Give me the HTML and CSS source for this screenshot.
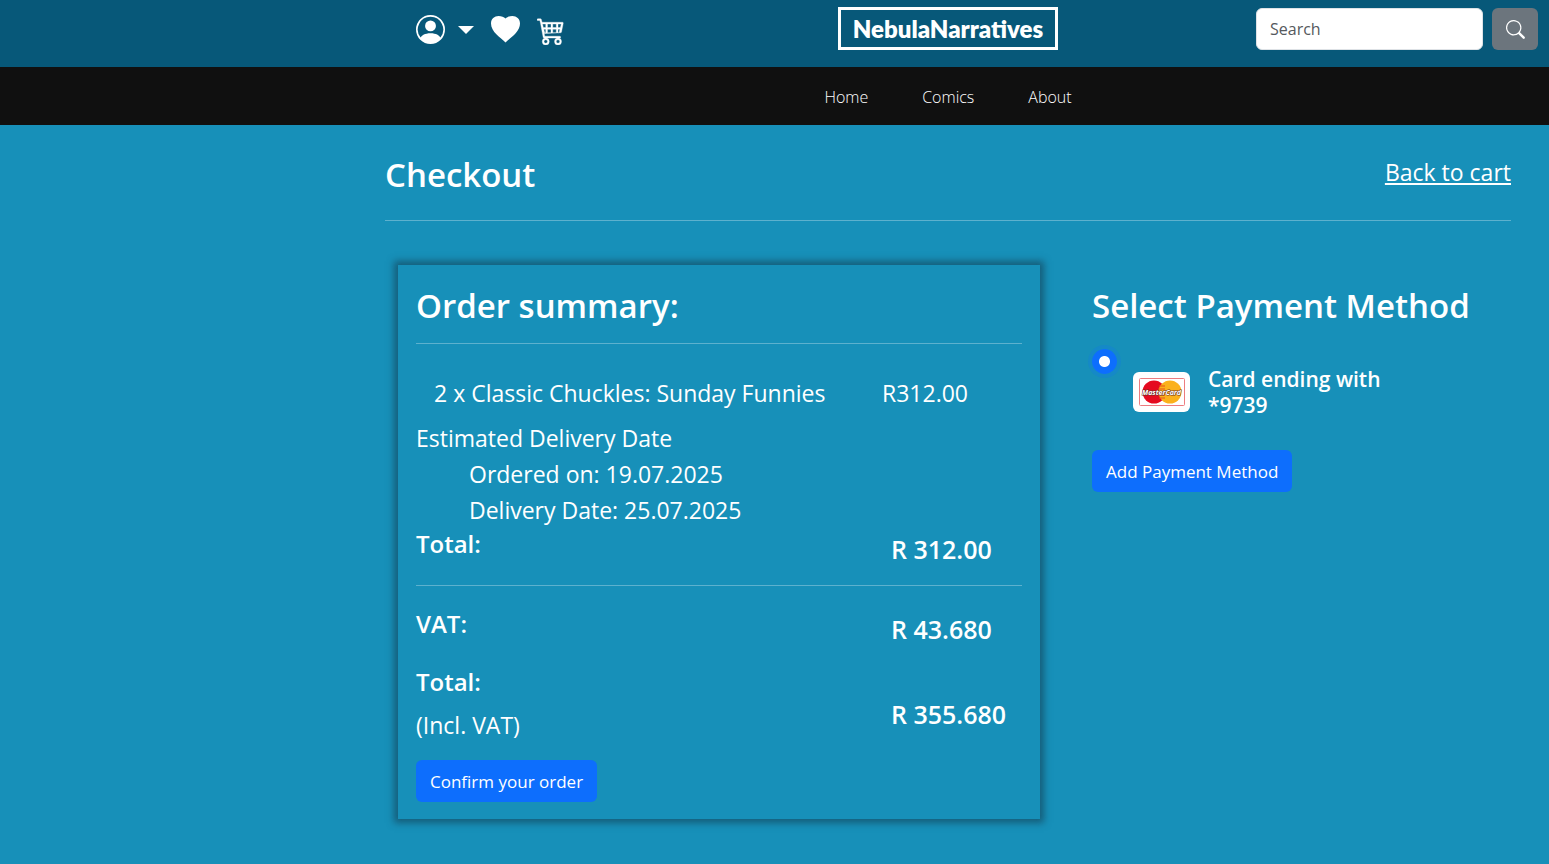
FILE: index.html
```html
<!DOCTYPE html>
<html lang="en">
<head>
<meta charset="utf-8">
<meta name="viewport" content="width=device-width, initial-scale=1">
<title>NebulaNarratives - Checkout</title>
<link rel="stylesheet" href="styles.css">
</head>
<body>
<header class="topbar">
  <div class="account">
    <button class="icon-button profile" type="button" aria-label="Account">
      <svg width="29" height="29" viewBox="0 0 16 16" fill="currentColor"><path d="M11 6a3 3 0 1 1-6 0 3 3 0 0 1 6 0"/><path fill-rule="evenodd" d="M0 8a8 8 0 1 1 16 0A8 8 0 0 1 0 8m8-7a7 7 0 0 0-5.468 11.37C3.242 11.226 4.805 10 8 10s4.757 1.225 5.468 2.37A7 7 0 0 0 8 1"/></svg>
      <svg width="16" height="8" viewBox="0 0 16 8" fill="currentColor"><path d="M0 0h16L8 8z"/></svg>
    </button>
    <a class="icon-button" href="#" aria-label="Wishlist">
      <svg width="29" height="29" viewBox="0 0 29 29" fill="currentColor"><path d="M14.500 27.500C9.500 22.500 0 17 0 8.500C0 3.800 3.500 1 7.500 1c3 0 5.500 1 7 2.500C16 2 18.500 1 21.500 1c4 0 7.500 2.800 7.500 7.500c0 8.500-9.500 14-14.500 19z"/></svg>
    </a>
    <a class="icon-button cart" href="#" aria-label="Cart">
      <svg width="28" height="28" viewBox="0 0 16 16" fill="currentColor" stroke="currentColor" stroke-width=".2"><path d="M0 1.500A.5.5 0 0 1 .5 1H2a.5.5 0 0 1 .485.379L2.890 3H14.500a.5.5 0 0 1 .49.598l-1 5a.5.5 0 0 1-.465.401l-9.397.472L4.415 11H13a.5.5 0 0 1 0 1H4a.5.5 0 0 1-.491-.408L2.010 3.607 1.610 2H.5a.5.5 0 0 1-.5-.5M3.140 4l.5 2H5V4zM6 4v2h2V4zm3 0v2h2V4zm3 0v2h1.360l.5-2zm1.110 3H12v2h.610zM11 7H9v2h2zM8 7H6v2h2zM5 7H3.890l.5 2H5zm0 5a2 2 0 1 0 0 4 2 2 0 0 0 0-4m-1 2a1 1 0 1 1 2 0 1 1 0 0 1-2 0m8-2a2 2 0 1 0 0 4 2 2 0 0 0 0-4m-1 2a1 1 0 1 1 2 0 1 1 0 0 1-2 0"/></svg>
    </a>
  </div>
  <a class="brand" href="#">NebulaNarratives</a>
  <form class="search">
    <input class="search-input" type="search" placeholder="Search" aria-label="Search">
    <button class="search-button" type="button" aria-label="Search">
      <svg width="19" height="19" viewBox="0 0 16 16" fill="currentColor"><path d="M11.742 10.344a6.500 6.500 0 1 0-1.397 1.398l3.850 3.850a1 1 0 0 0 1.415-1.414l-3.850-3.850zM12 6.500a5.500 5.500 0 1 1-11 0 5.500 5.500 0 0 1 11 0"/></svg>
    </button>
  </form>
</header>
<nav class="menu">
  <a class="menu-link" href="#">Home</a>
  <a class="menu-link" href="#">Comics</a>
  <a class="menu-link" href="#">About</a>
</nav>
<main class="page">
  <div class="page-head">
    <h1 class="title">Checkout</h1>
    <a class="back-link" href="#">Back to cart</a>
  </div>
  <div class="columns">
    <section class="summary">
      <h2 class="title summary-title">Order summary:</h2>
      <div class="line item"><span>2 x Classic Chuckles: Sunday Funnies</span><span>R312.00</span></div>
      <div class="delivery">
        <p class="delivery-title">Estimated Delivery Date</p>
        <p class="delivery-date">Ordered on: 19.07.2025</p>
        <p class="delivery-date">Delivery Date: 25.07.2025</p>
      </div>
      <div class="line subtotal"><h3 class="label">Total:</h3><strong class="amount">R 312.00</strong></div>
      <div class="line vat"><h3 class="label">VAT:</h3><strong class="amount">R 43.680</strong></div>
      <div class="line grand">
        <div><h3 class="label">Total:</h3><p class="note">(Incl. VAT)</p></div>
        <strong class="amount">R 355.680</strong>
      </div>
      <button class="primary" type="button">Confirm your order</button>
    </section>
    <section class="payment">
      <h2 class="title">Select Payment Method</h2>
      <div class="method">
        <input class="radio" type="radio" name="card" id="card" checked>
        <label class="card-label" for="card">
          <svg class="card-logo" width="57" height="40" viewBox="0 0 57 40" role="img" aria-label="MasterCard">
            <rect width="57" height="40" rx="6" fill="#fff"/>
            <rect x="6.500" y="6.500" width="45" height="27" rx="1" fill="none" stroke="#ed7c80"/>
            <circle cx="21" cy="20" r="11.500" fill="#e50b20"/>
            <circle cx="37" cy="20" r="11.500" fill="#fbb11c"/>
            <path d="M26 14h6M25 17h7M25 23h7M26 26h6" stroke="#e5521d" stroke-width="1.200"/>
            <text class="logo-text" x="28.500" y="23" text-anchor="middle">MasterCard</text>
          </svg>
          <span class="card-text">Card ending with<br>*9739</span>
        </label>
      </div>
      <button class="primary" type="button">Add Payment Method</button>
    </section>
  </div>
</main>
</body>
</html>
```
FILE: styles.css
```css
* { box-sizing: border-box; }
body {
  margin: 0;
  min-height: 100vh;
  background: #1790b9;
  color: #fff;
  font-family: "Open Sans", "Noto Sans", sans-serif;
  font-size: 23px;
  line-height: 36px;
}
h1, h2, h3, p { margin: 0; }
a { color: inherit; }
svg { display: block; }
button, input { font-family: inherit; }

.topbar {
  display: grid;
  grid-template-columns: 1fr 220px 1fr;
  align-items: start;
  column-gap: 16px;
  height: 67px;
  padding: 7px 11px 0 358px;
  background: #075879;
}
.account { display: flex; align-items: flex-start; gap: 17px; padding: 8px 0 0 58px; }
.icon-button { display: flex; padding: 0; border: 0; background: none; color: #fff; }
.profile { align-items: center; gap: 13px; }
.cart { padding-top: 2px; }
.brand {
  border: 3px solid #fff;
  font-family: Lato, sans-serif;
  font-size: 24px;
  font-weight: 800;
  line-height: 37px;
  text-align: center;
  text-decoration: none;
}
.search { display: flex; justify-content: flex-end; gap: 9px; padding-top: 1px; }
.search-input {
  width: 227px;
  height: 42px;
  padding: 0 13px;
  border: 1px solid #dee2e6;
  border-radius: 6px;
  background: #fff;
  font-size: 16px;
}
.search-input::placeholder { color: #55595d; }
.search-button {
  display: flex;
  align-items: center;
  justify-content: center;
  width: 46px;
  height: 42px;
  padding: 0;
  border: 0;
  border-radius: 6px;
  background: #6c757d;
  color: #fff;
}

.menu {
  display: flex;
  justify-content: center;
  gap: 54px;
  height: 58px;
  padding-left: 347px;
  background: #101010;
}
.menu-link { font-size: 16px; font-weight: 300; line-height: 60px; text-decoration: none; }

.page { padding: 29px 38px 40px 385px; }
.title { font-size: 33px; font-weight: 600; line-height: 42px; }
.page-head {
  display: flex;
  justify-content: space-between;
  padding-bottom: 24px;
  border-bottom: 1px solid #5db1ce;
}
.columns {
  display: grid;
  grid-template-columns: 642fr 407fr;
  gap: 52px;
  padding: 44px 12px 0 13px;
}

.summary {
  padding: 20px 18px 17px;
  box-shadow: 0 0 7px 4px rgba(20, 60, 80, .6);
}
.summary-title { padding-bottom: 16px; border-bottom: 1px solid #5db1ce; }
.line { display: grid; grid-template-columns: 475px 1fr; }
.item { grid-template-columns: 448px 1fr; padding: 31px 0 9px 18px; }
.delivery-date { padding-left: 53px; }
.label { font-size: 24px; font-weight: 600; line-height: 30px; }
.amount { padding-top: 5px; font-size: 25px; font-weight: 600; line-height: 30px; }
.subtotal { padding: 1px 0 21px; border-bottom: 1px solid #5db1ce; }
.vat { padding-top: 23px; }
.grand { padding: 23px 0 17px; }
.grand .amount { padding-top: 32px; }
.note { padding-top: 10px; }
.primary {
  height: 42px;
  padding: 0 14px;
  border: 0;
  border-radius: 6px;
  background: #0d6efd;
  color: #fff;
  font-size: 17px;
}

.payment { padding-top: 20px; }
.method { display: flex; gap: 16px; padding: 22px 0 32px; }
.radio {
  appearance: none;
  width: 25px;
  height: 25px;
  margin: 0;
  border-radius: 50%;
  background: radial-gradient(circle, #fff 5px, #0d6efd 6px);
  box-shadow: 0 0 0 4px rgba(13, 110, 253, .2);
}
.card-label {
  display: flex;
  align-items: center;
  gap: 18px;
  padding-top: 17px;
  font-size: 21px;
  font-weight: 600;
  line-height: 26px;
}
.logo-text {
  fill: #fff;
  stroke: #6b3026;
  stroke-width: 1px;
  paint-order: stroke;
  font-family: "Open Sans", sans-serif;
  font-size: 7px;
  font-style: italic;
  font-weight: 700;
}
```
